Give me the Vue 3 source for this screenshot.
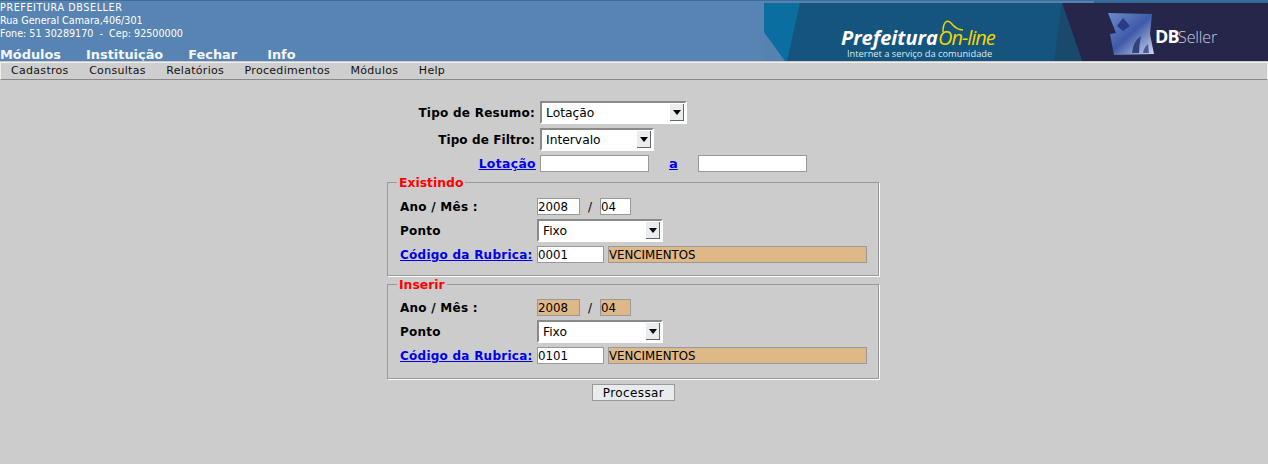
<script setup>
const topMenu = ['Módulos', 'Instituição', 'Fechar', 'Info']
const subMenu = ['Cadastros', 'Consultas', 'Relatórios', 'Procedimentos', 'Módulos', 'Help']
const sections = [
  { title: 'Existindo', ano: '2008', mes: '04', code: '0001', locked: false },
  { title: 'Inserir', ano: '2008', mes: '04', code: '0101', locked: true }
]
</script>

<template>
  <div class="page">
    <header class="head">
      <div class="info">
        <div class="address">
          <div class="org">PREFEITURA DBSELLER</div>
          <div>Rua General Camara,406/301</div>
          <div>Fone: 51 30289170 &nbsp;- &nbsp;Cep: 92500000</div>
        </div>
        <nav class="topnav"><span v-for="m in topMenu" :key="m">{{ m }}</span></nav>
      </div>
      <svg class="banner" width="504" height="61" viewBox="0 0 504 61">
        <defs>
          <linearGradient id="cube" x1="0" y1="0" x2="1" y2="1">
            <stop offset="0" stop-color="#6c8ccc" />
            <stop offset="0.5" stop-color="#3f5aa8" />
            <stop offset="1" stop-color="#d5dcee" />
          </linearGradient>
        </defs>
        <rect width="504" height="61" fill="#15547d" />
        <rect x="330" width="174" height="3" fill="#2f6a9a" />
        <rect width="330" height="3" fill="#5682b0" />
        <polygon points="0,3 36,3 23,61 21,61 0,32" fill="#0a6fa0" />
        <polygon points="0,32 21,61 0,61" fill="#5682b0" />
        <polygon points="298,3 504,3 504,61 318,61" fill="#26264a" />
        <polygon points="298,3 318,61 290,61" fill="#1a4a6b" />
        <text x="77" y="45" class="t-pref">Prefeitura</text>
        <text x="174" y="45" class="t-online">On-line</text>
        <path d="M179 32 C179 22 183 19 187 23 C191 28 194 30 199 30" fill="none" stroke="#f2d600" stroke-width="1.5" />
        <text x="83" y="57" class="t-sub">Internet a serviço da comunidade</text>
        <g class="logo">
          <path d="M344 13 L388 14 L386 34 L390 54 L350 55 L346 34 L352 33 Z" fill="url(#cube)" />
          <polygon points="359,18 366,26 359,31 353,26" fill="#2b3b86" />
          <path d="M368 53 Q369 41 377 36 Q375 45 375 53 Z" fill="#33427f" />
          <path d="M379 53 Q380 47 384 44 L385 53 Z" fill="#4a5a98" />
        </g>
        <text x="391" y="43" class="t-db">DB</text>
        <text x="414" y="43" class="t-seller">Seller</text>
      </svg>
    </header>

    <nav class="subnav"><span v-for="m in subMenu" :key="m">{{ m }}</span></nav>

    <main class="main">
      <form class="form" @submit.prevent>
        <div class="filter">
          <div class="frow r-sel">
            <b class="flabel">Tipo de Resumo:</b>
            <div class="select s-resumo"><span>Lotação</span><i class="arrow"></i></div>
          </div>
          <div class="frow r-sel">
            <b class="flabel f-tight">Tipo de Filtro:</b>
            <div class="select s-filtro"><span>Intervalo</span><i class="arrow"></i></div>
          </div>
          <div class="frow r-range">
            <a class="flabel link l-lot" href="#">Lotação</a>
            <input class="field f-range" />
            <a class="link a-link" href="#">a</a>
            <input class="field f-range" />
          </div>
        </div>

        <fieldset v-for="s in sections" :key="s.title" class="box">
          <legend>{{ s.title }}</legend>
          <div class="brow b-date">
            <b class="blabel">Ano / Mês :</b>
            <input class="field f-ano" :class="{ locked: s.locked }" :value="s.ano" />
            <span class="slash">/</span>
            <input class="field f-mes" :class="{ locked: s.locked }" :value="s.mes" />
          </div>
          <div class="brow b-sel">
            <b class="blabel">Ponto</b>
            <div class="select s-ponto"><span>Fixo</span><i class="arrow"></i></div>
          </div>
          <div class="brow b-code">
            <a class="blabel link" href="#">Código da Rubrica:</a>
            <input class="field f-code" :value="s.code" />
            <input class="field f-desc locked" value="VENCIMENTOS" />
          </div>
        </fieldset>

        <button class="submit" type="submit">Processar</button>
      </form>
    </main>
  </div>
</template>

<style>
html, body { margin: 0; background: #cccccc; }
</style>

<style scoped>
.page { width: 1268px; height: 464px; overflow: hidden; background: #ccc; font-family: "DejaVu Sans", sans-serif; color: #000; }
.head { height: 61px; overflow: hidden; background: #5784b2; border-top: 1px solid #3f6b9a; box-sizing: border-box; display: flex; justify-content: space-between; }
.info { color: #fff; }
.address { font-size: 9.6px; line-height: 13px; white-space: nowrap; }
.org { letter-spacing: .6px; }
.topnav { display: flex; gap: 25px; font-size: 12.9px; font-weight: bold; line-height: 15px; margin-top: 7px; color: #f2f5fa; }
.topnav span:last-child { margin-left: 5px; }
.banner { margin-top: -1px; display: block; height: 61px; }
.logo { filter: blur(.6px); }
.t-pref { font: italic bold 20px "Open Sans", sans-serif; fill: #fff; }
.t-online { font: italic 20px "Open Sans", sans-serif; fill: #f2d600; letter-spacing: -1px; }
.t-sub { font: 9.3px "Open Sans", sans-serif; fill: #dfe8ee; }
.t-db { font: bold 18px "Open Sans", sans-serif; fill: #fff; letter-spacing: -.8px; }
.t-seller { font: 300 16px "Open Sans", sans-serif; fill: #c9cfdd; letter-spacing: -0.1px; }
.subnav { height: 16px; margin-top: 1px; padding-left: 10px; border-top: 1px solid #eee; border-bottom: 1px solid #888; border-left: 1px solid #eee; border-right: 1px solid #eee; display: flex; gap: 20.5px; font-size: 11px; letter-spacing: .3px; line-height: 16px; color: #111; background: #cecece; }
.main { display: flex; justify-content: center; }
.form { width: 493px; margin-left: -1px; padding-top: 21px; display: flex; flex-direction: column; }
.filter { display: flex; flex-direction: column; }
.frow { display: flex; align-items: center; }
.r-sel { height: 23px; margin-bottom: 4px; }
.r-range { height: 17px; margin-bottom: 3px; }
.flabel { width: 148px; text-align: right; font-size: 12px; letter-spacing: .25px; font-weight: bold; margin-right: 5px; flex: none; white-space: nowrap; }
.f-tight { letter-spacing: .1px; }
.l-lot { width: 149px; margin-right: 4px; font-size: 12.4px; letter-spacing: .35px; }
.link { color: #0000ee; font-weight: bold; text-decoration: underline; }
.a-link { font-size: 13px; margin: 0 20px; width: 9px; }
.select { height: 23px; box-sizing: border-box; background: #fff; border: 2px solid; border-color: #8a8a8a #fff #fff #8a8a8a; display: flex; align-items: center; justify-content: space-between; font-size: 12.3px; padding: 0 1px 0 4px; }
.s-resumo { width: 147px; }
.s-filtro { width: 114px; }
.s-ponto { width: 126px; }
.arrow { width: 14px; height: 17px; box-sizing: border-box; background: #e9edf0; border-right: 1px solid #666; border-bottom: 1px solid #666; position: relative; }
.arrow::after { content: ""; position: absolute; left: 3px; top: 6px; border: 4px solid transparent; border-top: 5px solid #000; border-bottom: 0; }
.field { box-sizing: border-box; height: 17px; border: 1px solid #999; background: #fff; padding: 0; font: 11.8px "DejaVu Sans", sans-serif; color: #000; margin: 0; outline: none; }
.f-range { width: 109px; }
.box { margin: 0; padding: 0 12px; border: 1px solid; border-color: #999 #fff #fff #999; box-shadow: inset -1px -1px 0 #999; height: 102px; box-sizing: border-box; min-width: 0; }
.box + .box { height: 103px; }
.box legend { color: #f00; font-size: 12.4px; font-weight: bold; padding: 0 2px; margin-left: -3px; line-height: 15px; height: 15px; }
.brow { display: flex; align-items: center; }
.blabel { width: 137px; flex: none; font-size: 12px; letter-spacing: .25px; font-weight: bold; white-space: nowrap; }
.b-date { height: 17px; margin-top: 8px; }
.box + .box .b-date { margin-top: 7px; }
.b-sel { height: 23px; margin-top: 4px; }
.b-code { height: 17px; margin-top: 4px; }
.f-ano { width: 43px; }
.f-mes { width: 31px; }
.slash { width: 20px; text-align: center; font-size: 12px; }
.f-code { width: 67px; margin-right: 4px; }
.f-desc { width: 259px; }
.locked { background: #deb887; }
.submit { align-self: flex-start; margin: 4px 0 0 205px; width: 83px; height: 17px; box-sizing: border-box; padding: 0; background: #e8ecef; border: 1px solid #999; font: 12px "DejaVu Sans", sans-serif; color: #000; letter-spacing: .4px; }
</style>
